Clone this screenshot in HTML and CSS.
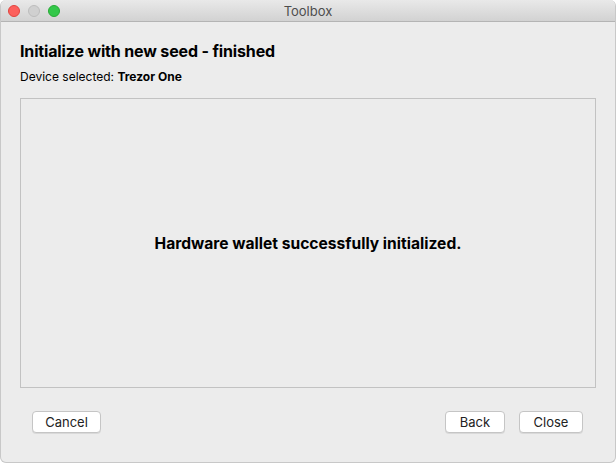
FILE: index.html
```html
<!DOCTYPE html>
<html>
<head>
<meta charset="utf-8">
<link rel="stylesheet" href="styles.css">
</head>
<body>
<div class="window">
  <div class="titlebar">
    <div class="lights">
      <span class="light red"></span>
      <span class="light gray"></span>
      <span class="light green"></span>
    </div>
    <div class="title">Toolbox</div>
  </div>
  <div class="content">
    <h1 class="heading">Initialize with new seed - finished</h1>
    <div class="device">Device selected: <b>Trezor One</b></div>
    <div class="panel">
      <div class="message">Hardware wallet successfully initialized.</div>
    </div>
    <div class="buttons">
      <button class="btn btn-cancel">Cancel</button>
      <div class="spacer"></div>
      <button class="btn btn-back">Back</button>
      <button class="btn btn-close">Close</button>
    </div>
  </div>
</div>
</body>
</html>
```
FILE: styles.css
```css
html, body {
  margin: 0;
  padding: 0;
  background: #ffffff;
  width: 616px;
  height: 463px;
  overflow: hidden;
}
body {
  font-family: "Inter", "Liberation Sans", sans-serif;
  color: #000;
}
.window {
  width: 616px;
  height: 463px;
  box-sizing: border-box;
  background: #ececec;
  border-radius: 6px;
  border: 1px solid #c8c8c8;
  border-top: none;
  overflow: hidden;
  display: flex;
  flex-direction: column;
}
.titlebar {
  height: 22px;
  box-sizing: border-box;
  background: linear-gradient(#e9e9e9, #d2d2d2);
  border-bottom: 1px solid #b4b4b4;
  display: flex;
  align-items: center;
  position: relative;
  flex: none;
}
.lights {
  display: flex;
  gap: 8px;
  padding-left: 7px;
}
.light {
  width: 12px;
  height: 12px;
  border-radius: 50%;
  box-sizing: border-box;
}
.red { background: #fc605c; border: 1px solid #e0443e; }
.gray { background: #d0d0d0; border: 1px solid #bcbcbc; }
.green { background: #34c84a; border: 1px solid #27aa35; }
.title {
  position: absolute;
  left: 0;
  right: 0;
  text-align: center;
  font-size: 13px;
  color: #4d4d4d;
  top: 3px;
}
.content {
  flex: 1;
  display: flex;
  flex-direction: column;
  padding: 0 19px 0 19px;
}
.heading {
  margin: 19px 0 0 0;
  font-size: 16px;
  font-weight: 700;
  line-height: 20px;
  letter-spacing: -0.15px;
}
.device {
  margin-top: 8px;
  font-size: 12px;
  line-height: 15px;
}
.panel {
  margin-top: 14px;
  height: 290px;
  box-sizing: border-box;
  border: 1px solid #c2c2c2;
  background: #ececec;
  display: flex;
  align-items: center;
  justify-content: center;
}
.message {
  font-size: 15.6px;
  font-weight: 700;
  margin-top: 0;
}
.buttons {
  display: flex;
  align-items: center;
  margin-top: 23px;
  padding: 0 13px 0 12px;
}
.spacer { flex: 1; }
.btn {
  font-family: inherit;
  font-size: 13px;
  height: 22px;
  padding: 0;
  background: #fff;
  border: 1px solid #c5c5c5;
  border-radius: 4px;
  box-shadow: 0 1px 0 rgba(0,0,0,0.08);
  color: #222;
}
.btn-cancel { width: 69px; }
.btn-back { width: 60px; }
.btn-close { width: 64px; margin-left: 14px; }
```
